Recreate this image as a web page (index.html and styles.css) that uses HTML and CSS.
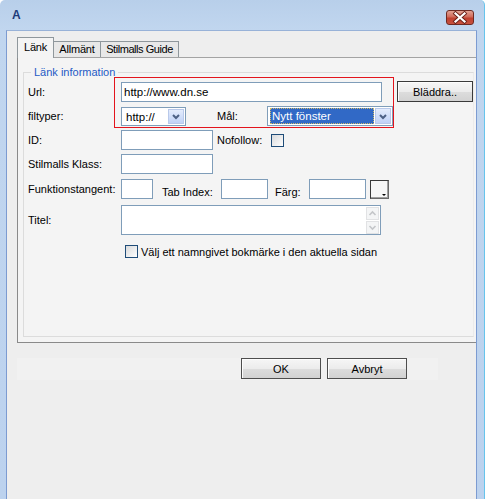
FILE: index.html
```html
<!DOCTYPE html>
<html>
<head>
<meta charset="utf-8">
<title>A</title>
<link rel="stylesheet" href="styles.css">
</head>
<body>
<div class="window">
  <div class="titlebar">
    <span class="title">A</span>
    <span class="close">
      <svg width="26" height="13" viewBox="0 0 26 13">
        <path d="M8.5 2.5 L17.5 10.5 M17.5 2.5 L8.5 10.5" stroke="#6b231b" stroke-width="4" stroke-linecap="square" fill="none"/>
        <path d="M8.5 2.5 L17.5 10.5 M17.5 2.5 L8.5 10.5" stroke="#ffffff" stroke-width="2.2" stroke-linecap="square" fill="none"/>
      </svg>
    </span>
  </div>
  <div class="client">
    <div class="tabs">
      <div class="tab active">Länk</div>
      <div class="tab t-allmant">Allmänt</div>
      <div class="tab t-guide">Stilmalls Guide</div>
    </div>
    <div class="panel">
      <div class="highlight"></div>
      <fieldset class="group">
        <legend>Länk information</legend>
        <div class="rows">
          <div class="row">
            <span class="lbl">Url:</span>
            <div class="field w-url">http://www.dn.se</div>
            <div class="btn browse">Bläddra..</div>
          </div>
          <div class="row">
            <span class="lbl">filtyper:</span>
            <div class="select s-type">
              <span class="val">http://</span>
              <span class="arrow"><svg width="14" height="15" viewBox="0 0 14 15"><path d="M4 6 L7 9 L10 6" stroke="#4d6185" stroke-width="2" fill="none"/></svg></span>
            </div>
            <span class="lbl2 l-mal">Mål:</span>
            <div class="select s-target">
              <span class="val selected">Nytt fönster</span>
              <span class="arrow"><svg width="14" height="15" viewBox="0 0 14 15"><path d="M4 6 L7 9 L10 6" stroke="#4d6185" stroke-width="2" fill="none"/></svg></span>
            </div>
          </div>
          <div class="row">
            <span class="lbl">ID:</span>
            <div class="field w-id"></div>
            <span class="lbl2 l-nofollow">Nofollow:</span>
            <span class="cb"></span>
          </div>
          <div class="row">
            <span class="lbl">Stilmalls Klass:</span>
            <div class="field w-id"></div>
          </div>
          <div class="row r-keys">
            <span class="lbl">Funktionstangent:</span>
            <div class="field w-key"></div>
            <span class="lbl2 low l-tab">Tab Index:</span>
            <div class="field w-tab"></div>
            <span class="lbl2 low l-farg">Färg:</span>
            <div class="field w-farg"></div>
            <span class="colorbtn"><svg width="17" height="17" viewBox="0 0 17 17"><path d="M11 13 L15 13 L13 15 Z" fill="#000"/></svg></span>
          </div>
          <div class="row r-title">
            <span class="lbl">Titel:</span>
            <div class="textarea">
              <div class="sb">
                <span class="sbtn"><svg width="11" height="11" viewBox="0 0 11 11"><path d="M2.5 7 L5.5 4 L8.5 7" stroke="#c4c6c9" stroke-width="1.6" fill="none"/></svg></span>
                <span class="sbtn"><svg width="11" height="11" viewBox="0 0 11 11"><path d="M2.5 4 L5.5 7 L8.5 4" stroke="#c4c6c9" stroke-width="1.6" fill="none"/></svg></span>
              </div>
            </div>
          </div>
          <div class="row r-bookmark">
            <span class="cb cb-book"></span>
            <span class="cb-text">Välj ett namngivet bokmärke i den aktuella sidan</span>
          </div>
        </div>
      </fieldset>
    </div>
    <div class="actions">
      <div class="btn action">OK</div>
      <div class="btn action">Avbryt</div>
    </div>
  </div>
</div>
</body>
</html>
```

FILE: styles.css
```css
* { box-sizing: border-box; }
html, body { margin: 0; padding: 0; }
body {
  width: 485px;
  height: 499px;
  overflow: hidden;
  background: #ffffff;
  font-family: "Liberation Sans", Arial, sans-serif;
  font-size: 11px;
  color: #000;
}
.window {
  width: 485px;
  height: 499px;
  display: flex;
  flex-direction: column;
  background: linear-gradient(#b8cfea 0px, #c1d6ef 30px, #bcd2ee 100%);
  border-right: 1px solid #66c4ec;
  border-top-left-radius: 5px;
  border-top-right-radius: 5px;
  overflow: hidden;
}
.titlebar {
  height: 30px;
  flex: none;
  display: flex;
  justify-content: space-between;
  align-items: flex-start;
  padding: 0 10px 0 12px;
}
.title {
  margin-top: 8px;
  font-weight: bold;
  font-size: 12px;
  line-height: 14px;
  color: #1d3b7a;
}
.close {
  margin-top: 10px;
  width: 28px;
  height: 15px;
  border: 1px solid #6f2a22;
  border-radius: 3px;
  background: linear-gradient(#e3a394 0%, #d06a5a 45%, #c0402f 55%, #c7523f 100%);
  display: flex;
  align-items: center;
  justify-content: center;
}
.client {
  flex: 1;
  margin: 0 7px 0 6px;
  background: #eeeeee;
  border-left: 1px solid #7c9bd1;
  border-right: 1px solid #7c9bd1;
  border-top: 1px solid #98b2d8;
  padding: 6px 0 0 10px;
  display: flex;
  flex-direction: column;
}
.tabs {
  height: 20px;
  display: flex;
  align-items: flex-end;
  flex: none;
}
.tab {
  height: 16px;
  border: 1px solid #8f979c;
  border-bottom: none;
  background: #e8e8e8;
  text-align: center;
  line-height: 15px;
  white-space: nowrap;
  letter-spacing: -0.2px;
}
.tab.active {
  width: 37px;
  height: 21px;
  margin-bottom: -1px;
  background: #f4f4f4;
  position: relative;
  z-index: 1;
  line-height: 19px;
}
.t-allmant { width: 48px; margin-left: -1px; }
.t-guide { width: 79px; margin-left: -1px; letter-spacing: -0.45px; }
.panel {
  position: relative;
  height: 286px;
  flex: none;
  background: #f4f4f4;
  border-left: 1px solid #8a8a8a;
  border-bottom: 1px solid #8a8a8a;
  border-top: 1px solid #a3a3a3;
  padding: 8px 2px 0 5px;
}
.highlight {
  position: absolute;
  left: 96px;
  top: 19px;
  width: 280px;
  height: 51px;
  border: 1px solid #e3141c;
  z-index: 2;
  pointer-events: none;
}
.group {
  margin: 0;
  height: 271px;
  border: 1px solid #dcdcdc;
  border-right-color: #ebebeb;
  padding: 3px 0 0 4px;
  min-width: 0;
}
.group legend {
  padding: 0 3px;
  margin-left: 3px;
  color: #1f5ac5;
  line-height: 13px;
  font-size: 11px;
}
.rows { display: flex; flex-direction: column; }
.row {
  display: flex;
  align-items: center;
  height: 20px;
  margin-top: 4px;
  white-space: nowrap;
}
.row:first-child { margin-top: 0; }
.row.r-keys { margin-top: 5px; }
.row.r-title { height: 30px; margin-top: 6px; align-items: flex-start; }
.row.r-title .lbl { margin-top: 9px; }
.row.r-bookmark { height: 13px; margin-top: 10px; }
.lbl { width: 93px; flex: none; }
.lbl2 { flex: none; }
.low { margin-top: 6px; }
.field {
  height: 20px;
  border: 1px solid #7f9db9;
  background: #ffffff;
  padding-left: 2px;
  line-height: 18px;
  overflow: hidden;
  flex: none;
}
.w-url { width: 261px; font-size: 11.5px; }
.w-id { width: 92px; }
.w-key { width: 32px; }
.w-tab { width: 47px; }
.w-farg { width: 57px; }
.l-mal { width: 50px; margin-left: 31px; }
.l-nofollow { width: 54px; margin-left: 4px; }
.l-tab { width: 59px; margin-left: 9px; }
.l-farg { width: 34px; margin-left: 7px; }
.btn {
  height: 21px;
  border: 1px solid #4e4e4e;
  background: linear-gradient(#f6f6f6 0%, #ececec 50%, #dcdcdc 55%, #d2d2d2 100%);
  box-shadow: inset 1px 1px 0 #fdfdfd;
  display: flex;
  align-items: center;
  justify-content: center;
  flex: none;
}
.browse { width: 76px; margin-left: 15px; margin-top: -1px; height: 21px; align-self: flex-start; border-color: #3a3a3a; }
.select {
  display: flex;
  height: 20px;
  border: 1px solid #7f9db9;
  background: #ffffff;
  padding: 1px;
  flex: none;
}
.s-type { width: 65px; height: 19px; align-self: flex-end; }
.s-target { width: 126px; }
.val {
  flex: 1;
  padding-left: 3px;
  line-height: 16px;
  font-size: 11.5px;
}
.val.selected {
  background: #3169c6;
  color: #ffffff;
  outline: 1px dotted #cdb86a;
  outline-offset: -1px;
  margin: 0 1px 0 1px;
  padding-left: 2px;
}
.arrow {
  width: 16px;
  flex: none;
  border: 1px solid #b9c9ea;
  background: linear-gradient(#e4ecfc, #c0d2f7);
  display: flex;
  align-items: center;
  justify-content: center;
}
.cb {
  width: 13px;
  height: 13px;
  flex: none;
  border: 1px solid #1f4c78;
  background: linear-gradient(135deg, #d9dadc 0%, #f3f3f3 70%, #ffffff 100%);
}
.cb-book { margin-left: 97px; }
.cb-text { margin-left: 3px; }
.colorbtn {
  width: 19px;
  height: 19px;
  margin-left: 4px;
  flex: none;
  border: 1px solid #6a6a6a;
  border-top-color: #3a3a3a;
  border-left-color: #3a3a3a;
  background: #f7f7f7;
  box-shadow: inset -1px -1px 0 #a0a0a0;
  display: flex;
}
.textarea {
  width: 260px;
  height: 30px;
  flex: none;
  border: 1px solid #7f9db9;
  background: #ffffff;
  padding: 1px 1px 1px 0;
  display: flex;
  justify-content: flex-end;
}
.sb { width: 13px; display: flex; flex-direction: column; gap: 1px; }
.sbtn {
  height: 13px;
  border: 1px solid #e1e2e4;
  background: #f4f5f6;
  display: flex;
  align-items: center;
  justify-content: center;
}
.actions {
  flex: none;
  height: 22px;
  margin: 15px 38px 0 0;
  background: #f1f1f1;
  display: flex;
  justify-content: flex-end;
  gap: 6px;
  padding-right: 31px;
  align-items: flex-start;
}
.action { width: 80px; }
```
